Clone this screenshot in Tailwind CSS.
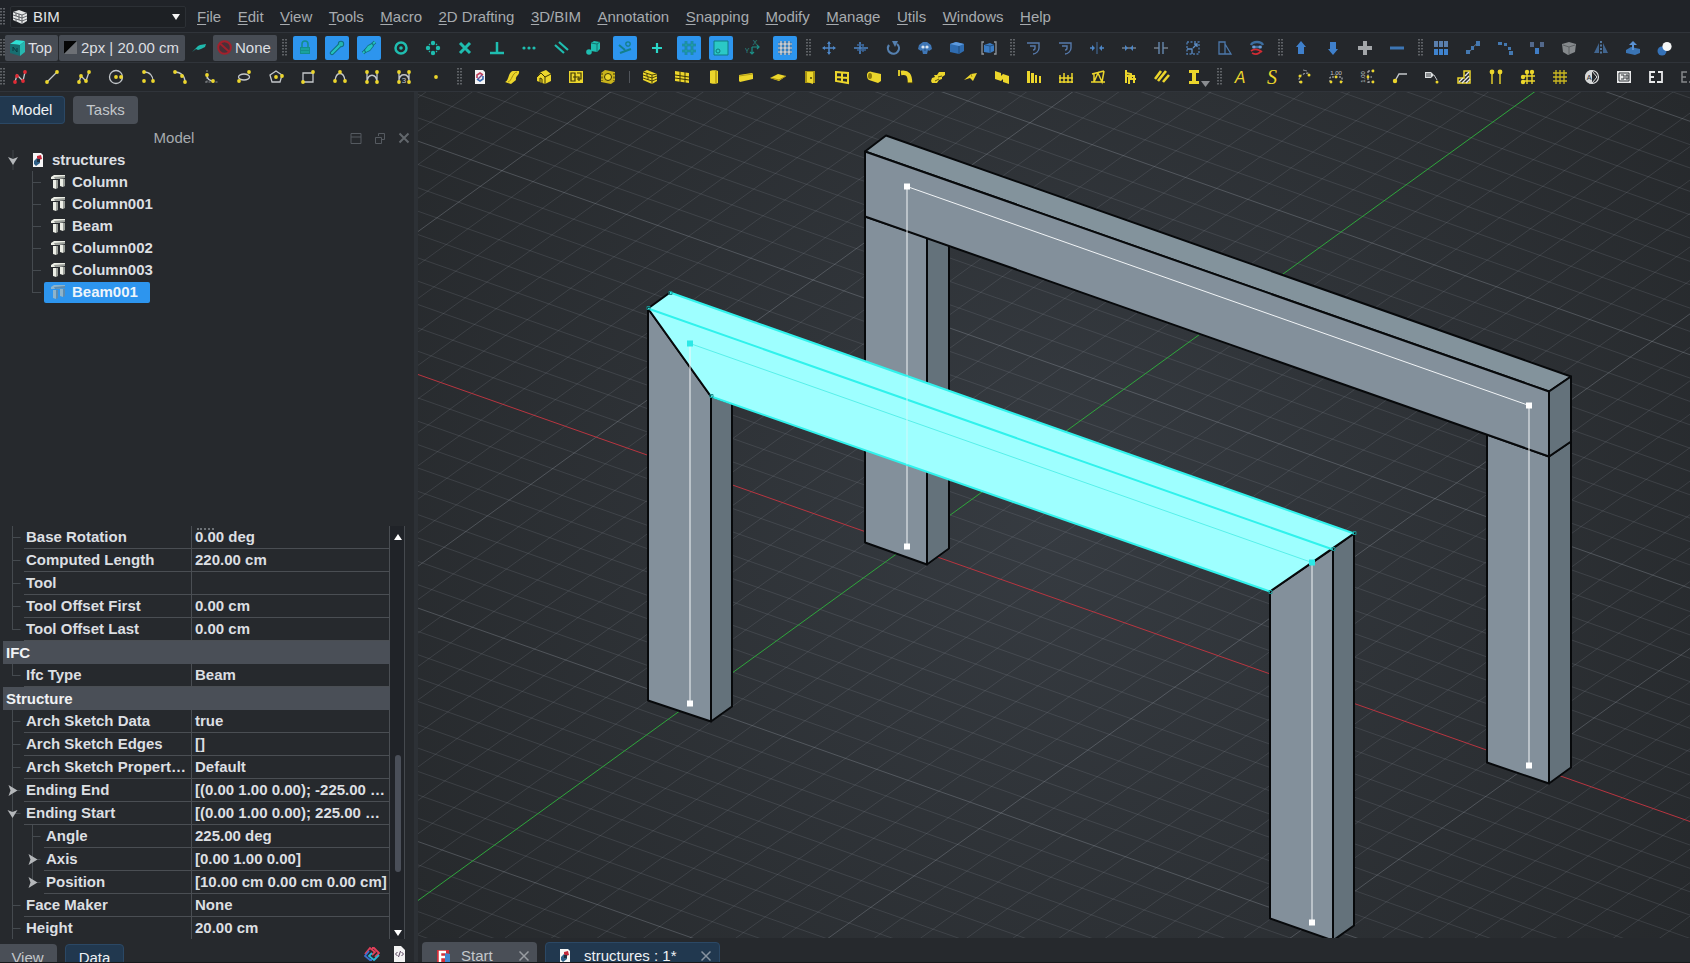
<!DOCTYPE html>
<html lang="en">
<head>
  <meta charset="utf-8">
  <meta name="viewport" content="width=device-width, initial-scale=1">
  <title>structures - BIM</title>
  <script src="https://cdn.jsdelivr.net/npm/@tailwindcss/browser@4"></script>
</head>
<body class="h-screen overflow-hidden flex flex-col bg-[#26292d] text-[#dcdfe2] text-[15px] leading-5 font-['Liberation_Sans',Arial,sans-serif] border-b border-[#17181a]">

  <!-- menu bar -->
  <header class="h-8 pt-0.5 shrink-0 flex items-center bg-[#202328] overflow-hidden">
    <span data-grip class="w-2 shrink-0 flex"></span>
    <div class="relative ml-0.5 w-44 shrink-0">
      <svg class="absolute left-0.5 top-[3px] pointer-events-none" width="16" height="16" viewBox="-8 -8 16 16">
        <path d="M-7-5L-1-7 7-4V4L2 7-7 3Z" fill="#e4e6e6"/>
        <path d="M-7-2L2 1 7-1M-7 1L2 4 7 2M-7-5L2-2 7-4M2-2V7M-4-4V-1M-1 0V3M-4 2V5M-1-3V0" stroke="#44484c" fill="none" stroke-width=".8"/>
      </svg>
      <select aria-label="Workbench" class="appearance-none w-full h-[22px] pl-[22px] leading-5 bg-[#1d2024] border border-[#2c3035] rounded-xs text-[#e2e4e6]">
        <option>BIM</option>
      </select>
      <svg class="absolute right-1.5 top-2 pointer-events-none" width="8" height="6" viewBox="0 0 8 6"><path d="M0 0H8L4 6Z" fill="#f4f4f4"/></svg>
    </div>
    <nav id="menu" class="ml-[11px] w-[854px] shrink-0 flex justify-between text-[#a7abaf] whitespace-nowrap"></nav>
  </header>

  <!-- first toolbar row -->
  <div class="h-[30px] shrink-0 flex items-center bg-[#24272b] border-t border-[#30343a] overflow-hidden">
    <span data-grip class="w-[5px] shrink-0 flex"></span>
    <button class="h-[26px] w-[53px] shrink-0 flex items-center gap-[3px] px-[5px] bg-[#474c54] rounded-xs mr-px">
      <svg class="shrink-0" width="15" height="16" viewBox="0 0 15 16"><path d="M0 4L6 0 15 1 10 5Z" fill="#2fe0d4"/><path d="M0 4L10 5V16L0 13Z" fill="#176e70"/><path d="M10 5L15 1V12L10 16Z" fill="#27b7b0"/><path d="M3 11V7L7 12V8" stroke="#0c3a40" fill="none"/></svg>
      Top
    </button>
    <button class="h-[26px] w-[126px] shrink-0 flex items-center gap-1 px-[5px] bg-[#474c54] rounded-xs whitespace-nowrap">
      <svg class="shrink-0" width="13" height="13" viewBox="0 0 13 13"><path d="M0 0H13L0 13Z" fill="#050505"/><path d="M13 0V13H0Z" fill="#6d7075"/></svg>
      2px | 20.00 cm
    </button>
    <button aria-label="Toggle construction mode" class="w-7 shrink-0 flex justify-center">
      <svg width="16" height="16" viewBox="-8 -8 16 16"><path d="M-7 4L-1-2 1-3 7-4 6-1 2 1-1 2-3 1Z" fill="#1fb9ad"/></svg>
    </button>
    <button class="h-[26px] w-16 shrink-0 flex items-center gap-[3px] px-1 bg-[#474c54] rounded-xs">
      <svg class="shrink-0" width="15" height="15" viewBox="0 0 15 15"><circle cx="7.500" cy="7.500" r="6.300" fill="#4a3038" stroke="#a3202c" stroke-width="2"/><path d="M3 3.500L12 11.500" stroke="#a3202c" stroke-width="2"/></svg>
      None
    </button>
    <div id="snapBar" class="flex items-center"></div>
  </div>

  <!-- second toolbar row -->
  <div class="h-[30px] shrink-0 flex items-center bg-[#24272b] border-y border-[#30343a] overflow-hidden">
    <span data-grip class="w-1 shrink-0 flex"></span>
    <div id="drawBar" class="flex items-center"></div>
  </div>

  <div class="flex-1 min-h-0 flex">
    <aside class="w-[414px] shrink-0 flex flex-col min-h-0">
      <div class="flex gap-2 pt-1 shrink-0">
        <button class="h-7 w-[65px] bg-[#21384f] text-[#eef1f4] rounded-r-sm border border-l-0 border-[#2b4865]">Model</button>
        <button class="h-7 w-[65px] bg-[#4a4f57] text-[#c3c7cb] rounded-sm">Tasks</button>
      </div>
      <div class="h-[25px] shrink-0 flex items-center text-[#a7abaf]">
        <h2 class="flex-1 text-center pt-0.5 pr-0.5">Model</h2>
        <div class="flex gap-3 pr-1 pt-0.5">
          <button aria-label="Minimize panel"><svg width="12" height="12" viewBox="0 0 12 12"><path d="M1 1.500H11V11.500H1ZM1 5H11" stroke="#555a60" fill="none"/></svg></button>
          <button aria-label="Float panel"><svg width="12" height="12" viewBox="0 0 12 12"><path d="M4.500 4V1.500H10.500V7.500H8M1.500 5.500H7.500V11.500H1.500Z" stroke="#555a60" fill="none"/></svg></button>
          <button aria-label="Close panel"><svg width="12" height="12" viewBox="0 0 12 12"><path d="M1.500 1.500L10.500 10.500M10.500 1.500L1.500 10.500" stroke="#62676c" stroke-width="2"/></svg></button>
        </div>
      </div>

      <div class="flex-1 min-h-0 overflow-hidden font-bold">
        <div class="h-[22px] flex items-center">
          <svg class="shrink-0 ml-2" width="10" height="20" viewBox="0 0 10 20"><path d="M5 0V20" stroke="#3f4449"/><path d="M0 7L5 9 10 7 5 15Z" fill="#b4b7ba"/></svg>
          <svg class="shrink-0 ml-[15px] mr-[9px]" width="10" height="14" viewBox="0 0 10 14"><path d="M0 0H8L10 2V14H0Z" fill="#f6f6f6"/><path d="M1 8L4 5 7 6V10L3 13 1 11Z" fill="#2f5f86"/><path d="M4 3L8 2 9 6 6 7 4 5Z" fill="#c32a3c"/><path d="M4 6H7V9H4Z" fill="#203040"/></svg>
          structures
        </div>
        <ul id="tree"></ul>
      </div>

      <!-- property view -->
      <div class="h-[413px] shrink-0 flex overflow-hidden pl-[3px] relative">
        <table class="w-[387px] table-fixed border-collapse font-bold self-start">
          <colgroup><col class="w-[189px]"><col></colgroup>
          <tbody id="props"></tbody>
        </table>
        <div class="absolute left-[197px] top-0.5 w-[17px] border-t-2 border-dotted border-[#6d7277]"></div>
        <div class="w-[15px] border-r border-[#45494e] bg-[#202328] flex flex-col items-center pt-2 pb-[3px] pl-0.5">
          <svg class="shrink-0" width="8" height="7" viewBox="0 0 8 7"><path d="M0 6H8L4 0Z" fill="#fff"/></svg>
          <div class="flex-[214] w-1.5"></div>
          <div class="flex-[117] w-1.5 rounded-full bg-[#4a4f59]"></div>
          <div class="flex-[57] w-1.5"></div>
          <svg class="shrink-0" width="8" height="7" viewBox="0 0 8 7"><path d="M0 1H8L4 7Z" fill="#fff"/></svg>
        </div>
      </div>

      <div class="h-[23px] shrink-0 pt-[5px] flex overflow-hidden">
        <button class="h-7 w-[57px] shrink-0 bg-[#4a4f57] text-[#c3c7cb] rounded-tr-sm mr-2 pr-0.5">View</button>
        <button class="h-7 w-[59px] shrink-0 bg-[#21384f] text-[#eef1f4] rounded-t-sm border border-[#2b4865]">Data</button>
        <button aria-label="IFC properties" class="shrink-0 ml-auto mr-3.5 self-start pt-0.5">
          <svg width="16" height="16" viewBox="-8 -8 16 16"><g fill="none" stroke-width="1.800"><path d="M-7 0L-2-6 3-2 0 1" stroke="#e0405a"/><path d="M0-6H2L7-1 3 3" stroke="#e0405a"/><path d="M7 1L2 6-3 2 0-1" stroke="#28b8d8"/><path d="M0 6H-2L-7 2-3-3" stroke="#3b6fd0"/></g></svg>
        </button>
        <button aria-label="Property source" class="shrink-0 mr-[9px] self-start pt-0.5">
          <svg width="11" height="16" viewBox="0 0 11 16"><path d="M0 0H7L11 4V16H0Z" fill="#f2f2f2"/><path d="M3.500 6L1.500 8 3.500 10M7.500 6L9.500 8 7.500 10M6.500 5L4.500 11" stroke="#55405c" fill="none"/></svg>
        </button>
      </div>
    </aside>

    <div class="w-1 shrink-0 bg-[#2d3136]"></div>

    <main class="flex-1 min-w-0 flex flex-col">
      <div class="flex-1 min-h-0">
        <svg class="block w-full h-full" viewBox="418 92 1272 847" preserveAspectRatio="xMidYMid slice" role="img" aria-label="3D view">
          <defs>
            <radialGradient id="bg" gradientUnits="userSpaceOnUse" cx="1054" cy="515" r="760">
              <stop offset="0" stop-color="#363b41"/><stop offset="1" stop-color="#26292c"/>
            </radialGradient>
          </defs>
          <rect x="418" y="92" width="1272" height="847" fill="url(#bg)"/>
          <path id="minor" stroke="#8b939b" stroke-opacity=".2" fill="none"/>
          <path id="major" stroke="#a5adb5" stroke-opacity=".3" fill="none"/>
          <path d="M418 375L1690 822" stroke="#b83540"/>
          <path d="M418 901L1535 92" stroke="#2fa63c"/>

          <g stroke="#07090b" stroke-width="2" stroke-linejoin="round">
            <!-- rear frame -->
            <path d="M865 217L927 238V565L865 543Z" fill="#83909b"/>
            <path d="M927 238L949 246V549L927 565Z" fill="#64727b"/>
            <path d="M1487 435L1549 457V784L1487 763Z" fill="#83909b"/>
            <path d="M1549 457L1571 442V768L1549 784Z" fill="#64727b"/>
            <path d="M865 152L886 136 1571 377 1549 392Z" fill="#83939c"/>
            <path d="M865 152L1549 392V457L865 217Z" fill="#83909b"/>
            <path d="M1549 392L1571 377V442L1549 457Z" fill="#64727b"/>
            <!-- front columns -->
            <path d="M648 309L711 397V722L648 701Z" fill="#83909b"/>
            <path d="M711 397L732 404V707L711 722Z" fill="#64727b"/>
            <path d="M1270 592L1333 549V941L1270 919Z" fill="#83909b"/>
            <path d="M1333 549L1354 534V926L1333 941Z" fill="#64727b"/>
          </g>
          <path d="M907 547V187L1529 406V766" stroke="#f2f5f7" fill="none"/>
          <path d="M648 309L670 293 1354 534 1270 592 711 397Z" fill="#9effff"/>
          <path d="M711 397L648 309 670 293M1270 592L1354 534" stroke="#07090b" stroke-width="2" fill="none"/>
          <path d="M670 293L1354 534M648 309L1333 550M711 397L1270 592" stroke="#30f2ec" stroke-width="2" fill="none"/>
          <path d="M690 344L1312 563" stroke="#58f0ea"/>
          <path d="M690 344V704M1312 563V923" stroke="#f2f5f7"/>
          <path d="M907 377V465" stroke="#d0f8fa"/>
          <g fill="#fff"><path d="M904 184h6v6h-6zM904 544h6v6h-6zM1526 403h6v6h-6zM1526 763h6v6h-6zM687 701h6v6h-6zM1309 920h6v6h-6z"/></g>
          <g fill="#2ce8e6"><path d="M687 341h6v6h-6zM1309 560h6v6h-6z"/></g>
          <g fill="none" stroke="#1a8f8c"><path d="M647 307h3v3h-3zM669 292h3v3h-3zM1332 548h3v3h-3zM1353 532h3v3h-3zM1269 591h3v3h-3zM710 395h3v3h-3z"/></g>
        </svg>
      </div>
      <div class="h-6 shrink-0 pt-1 pl-1 flex gap-2 overflow-hidden">
        <div class="h-7 w-[115px] shrink-0 flex items-center pl-3.5 pr-2 bg-[#4a4f57] text-[#c3c7cb] rounded-t-sm">
          <svg class="shrink-0 mr-[11px]" width="14" height="15" viewBox="0 0 14 15"><path d="M1 1H13V6L9 8V15H1Z" fill="#d3303a"/><path d="M9 4L14 5V14L9 15Z" fill="#3f86cf"/><path d="M4 13V3H10M4 8H9" stroke="#fff" stroke-width="2.500" fill="none"/></svg>
          <button class="flex-1 text-left">Start</button>
          <button aria-label="Close Start"><svg width="10" height="10" viewBox="0 0 10 10"><path d="M.5.500L9.500 9.500M9.500.500L.5 9.500" stroke="#989ca1" stroke-width="1.500"/></svg></button>
        </div>
        <div class="h-7 w-[175px] shrink-0 flex items-center pl-3.5 pr-2 bg-[#21384f] text-[#eef1f4] rounded-t-sm border border-[#2b4865]">
          <svg class="shrink-0 mr-3.5" width="10" height="14" viewBox="0 0 10 14"><path d="M0 0H8L10 2V14H0Z" fill="#f6f6f6"/><path d="M1 8L4 5 7 6V10L3 13 1 11Z" fill="#2f5f86"/><path d="M4 3L8 2 9 6 6 7 4 5Z" fill="#c32a3c"/><path d="M4 6H7V9H4Z" fill="#203040"/></svg>
          <button class="flex-1 text-left">structures : 1*</button>
          <button aria-label="Close structures"><svg width="10" height="10" viewBox="0 0 10 10"><path d="M.5.500L9.500 9.500M9.500.500L.5 9.500" stroke="#8793a0" stroke-width="1.500"/></svg></button>
        </div>
      </div>
    </main>
  </div>

  <script>
    const Y = '#ecd62c', W = '#c3c7ca', T = '#1fbdb0', B = '#4d86c6', D = '#3a3408';

    // small helpers for the icons, all drawn on a -8..8 grid
    const ln = (d, c = W, w = 1.3, extra = '') => `<path d="${d}" fill="none" stroke="${c}" stroke-width="${w}" ${extra}/>`;
    const fl = (d, c = Y) => `<path d="${d}" fill="${c}"/>`;
    const dots = (list, c = Y, r = 1.9) => list.map(([x, y]) => `<circle cx="${x}" cy="${y}" r="${r}" fill="${c}"/>`).join('');
    const txt = (s, x, y, size, c, extra = '') => `<text x="${x}" y="${y}" font-size="${size}" fill="${c}" text-anchor="middle" ${extra}>${s}</text>`;
    const dash = 'stroke-dasharray="2 1.5"';
    const GRIP = 'grip', SEP = 'sep';

    const snap = [
      GRIP,
      ['Snap lock', fl('M-5-1H5V6H-5Z', '#148f8c') + ln('M-3-1V-4A3 3 0 0 1 3-4V-1', '#148f8c', 1.6) + ln('M-4 1H4M-4 4H4', '#21b5ae', 1), 1],
      ['Endpoint', ln('M-5 5L3-3', '#126f80', 4.4, 'stroke-linecap="round"') + dots([[4, -4]], '#126f80', 3.2) + ln('M-5 5L3-3', '#25c4bd', 2.4, 'stroke-linecap="round"') + dots([[4, -4]], '#25b5b0', 2.2), 1],
      ['Midpoint', ln('M-6 5L6-6', '#126f80', 3.6) + ln('M-6 5L6-6', '#25c4bd', 1.8) + fl('M-5 2L-1-3 4-5 5-2 1 3-4 5Z', '#126f80') + fl('M-4 2L-1-2 3-4 4-2 1 2-3 4Z', '#25c4bd'), 1],
      ['Center', `<circle r="5.500" fill="none" stroke="${T}" stroke-width="2.500"/>` + dots([[0, 0]], T, 1.8)],
      ['Angle', dots([[0, -5], [0, 5], [-5, 0], [5, 0]], T, 2.2) + ln('M-3-4L-4-3M3-4L4-3M-3 4L-4 3M3 4L4 3', T)],
      ['Intersection', ln('M-5-5L5 5M5-5L-5 5', T, 3)],
      ['Perpendicular', ln('M0-6V4', T, 2.5) + ln('M-7 5H7', T, 2.5)],
      ['Extension', dots([[-5, 0], [0, 0], [5, 0]], T, 1.6)],
      ['Parallel', ln('M-6-3L3 5M-2-6L7 2', T, 2.2)],
      ['Special', fl('M-2-5L1-7 7-6V1L4 4-2 3Z', T) + ln('M-2-5L4-4 7-6M4-4V4', '#12736f', 1) + dots([[-4, 4]], T, 2.8)],
      ['Near', ln('M-6-3L0 2M-5 5L6 1', '#14808c', 2) + `<circle cx="3" cy="-4" r="2.200" fill="none" stroke="#14808c" stroke-width="1.300"/>`, 1],
      ['Ortho', ln('M0-5V5M-5 0H5', '#2ad6c8', 2.2)],
      ['Grid', ln('M-3-7V7M3-7V7M-7-3H7M-7 3H7', '#167c98', 2.6) + ln('M-3-7V7M3-7V7M-7-3H7M-7 3H7', '#23a5b0', 1), 1],
      ['Working plane', fl('M-7-7H7V7H-7Z', '#2bc8c6') + ln('M-7-7H7V7H-7Z', '#107c80', 1) + `<circle cx="-3" cy="3" r="2" fill="none" stroke="#107c80"/>`, 1],
      ['Dimensions', ln('M-1-1V6M-1-1H6M4-3L6-1 4 1M-3 4L-1 6 1 4', '#1c8f87', 1.2) + txt('X', 2, -3, 7, '#2a8a85') + txt('Y', -6, 5, 7, '#2a8a85')],
      ['Toggle grid', ln('M-4-7V7M0-7V7M4-7V7M-7-4H7M-7 0H7M-7 4H7', '#3c5f80', 2.4) + ln('M-4-7V7M0-7V7M4-7V7M-7-4H7M-7 0H7M-7 4H7', '#e4e8ec', 1.2), 1],
      GRIP,
      ['Move', ln('M0-6V6M-6 0H6', B, 1.6) + fl('M-2-4L0-7 2-4ZM-2 4L0 7 2 4ZM-4-2L-7 0-4 2ZM4-2L7 0 4 2Z', B)],
      ['Copy', ln('M-1-6V6M-7 0H7', B, 1.6) + ln('M2-4V4M-4-3H3M-4 2H5', '#3b6699', 1.4)],
      ['Rotate', ln('M-4-3A5.500 5.500 0 1 0 4-4', '#5580b0', 2.2) + fl('M-1-7H5L2-1Z', '#5580b0')],
      ['Clone', fl('M-7 1L-6-3-2-6H2L6-3 7 1 4 3 3 2 2 6H-2L-3 2-4 3Z', '#3f76b5') + dots([[-2, -1], [2, -1]], '#d8e4f0', 1.6) + ln('M-1 2H1', '#24507f', 1.2)],
      ['Simple copy', fl('M-7-4L-1-6 7-4V3L2 6-7 4Z', '#2f6cb0') + fl('M-7-4L-1-6 7-4 2-2Z', '#5d9ade') + ln('M2-2V6', '#204a78', 1)],
      ['Compound', ln('M-5-6H-7V6H-5M5-6H7V6H5', '#8f969d', 1.3) + fl('M-5-3L1-5 5-3V3L1 5-5 4Z', '#3b7cc4') + ln('M-4-3L1-2V5M1-2L5-3', '#24507f', 1)],
      GRIP,
      ['Offset', ln('M-6-5H6V0C6 3 3 6 0 6M-3-2H2V0C2 1 1 2 0 2', '#5679ab', 1.4)],
      ['Offset 2D', ln('M-6-5H6V0C6 3 3 6 0 6M-3-2H2V0C2 1 1 2 0 2', '#5679ab', 1.4)],
      ['Trim', ln('M0-6V6', '#41668f', 1.2) + ln('M-7 0H-3M7 0H3', B, 1.6) + fl('M-5-3L-2 0-5 3ZM5-3L2 0 5 3Z', B)],
      ['Join', ln('M-7 0H7', '#8794a2', 1.2) + fl('M-4-3L-1 0-4 3ZM4-3L1 0 4 3Z', B)],
      ['Split', ln('M-7 0H-2M2 0H7', '#9ba9b8', 1.2) + ln('M-2-6V6M2-6V6', '#6689b0', 1.4)],
      ['Scale', ln('M-6-6H6V6H-6Z', '#4c78aa', 1.4, dash) + ln('M-6 1H-1V6M0 0L4-4M1-4H4V-1', '#5d8fc8', 1.3)],
      ['Stretch', ln('M-6-6H0V6H-6ZM0-4L6 6H0', '#4c78aa', 1.3)],
      ['Draft to sketch', ln('M-6-3C-4-7 4-7 6-3M-5-1H5', '#3d6ea0', 2.4) + dots([[-3, -1], [3, -1]], '#6f9bd0', 1.5) + ln('M-6 3C-2 0 3 2 5 4M-5 5C-1 7 2 6 4 3', '#d02b33', 1.8)],
      GRIP,
      ['Upgrade', fl('M0-7L5-1H3V6H-3V-1H-5Z', '#3f80cc')],
      ['Downgrade', fl('M0 7L5 1H3V-6H-3V1H-5Z', '#3f80cc')],
      ['Add', ln('M0-7V7M-7 0H7', '#a3a6a9', 4)],
      ['Remove', ln('M-7 0H7', '#3d76b5', 3)],
      GRIP,
      ['Array', [-7, -2, 3].map(x => fl(`M${x}-7h4v6h-4z`, '#5a7fae') + fl(`M${x} 1h4v6h-4z`, '#3f83ce')).join('')],
      ['Path array', ln('M-6 5C-1 4-2-2 6-5', '#758699', 1) + fl('M3-7h4v5h-4zM-2-2h3v4h-3zM-7 2h4v4h-4z', '#4478b0')],
      ['Polar array', fl('M-7-6h4v3h-4zM-1-5h3v3h-3zM3-1h3v3h-3zM4 3h4v4h-4z', '#4478b0')],
      ['Point array', fl('M-7-6h4v5h-4zM3-6h4v5h-4z', '#53698c') + fl('M-2 0h4v6h-4z', '#3f7cc4')],
      ['Cut with plane', fl('M-7-4L0-6 7-4 6 4-1 7-6 4Z', '#85898c') + ln('M-6-3L0-1 6-3M0-1V6', '#5c6063', 1)],
      ['Mirror', fl('M-2-5V5H-7ZM2-5V5H7Z', '#41658f') + ln('M0-7V7', '#6799d0', 1.4, dash)],
      ['Extrude', fl('M-7 2L-2-1 7 1V5L2 7-7 5Z', '#3a74b4') + fl('M0-7L4-3H1V2H-1V-3H-4Z', '#5a92d4')],
      ['Difference', dots([[-3, 3]], '#3572b8', 4.5) + dots([[2, -1.500]], '#f5f6f6', 4.6)],
    ];

    const draw = [
      ['Sketch', ln('M-5 5L-3-2 3 4 5-5') + dots([[-5, 5], [-3, -1], [3, 4], [5, -5]], '#e02b35')],
      ['Line', ln('M-5 5L5-5') + dots([[-5, 5], [5, -5]])],
      ['Polyline', ln('M-5 5L-3-1 2 4 5-5') + dots([[-5, 5], [-3, -1], [2, 4], [5, -5]])],
      ['Circle', `<circle r="6.500" fill="none" stroke="${W}" stroke-width="1.300"/>` + dots([[0, 0], [5, 0]])],
      ['Arc', ln('M-4-5C2-5 5-1 5 4') + dots([[-4, -5], [-4, 4], [5, 4]])],
      ['Arc by 3 points', ln('M-5-5C1-5 5-1 5 5') + dots([[-5, -5], [2, -1], [5, 5]])],
      ['Fillet', ln('M-5-7V6M-7 5H7', '#8a8e92', 1, dash) + ln('M-5-2C-5 2-2 4 2 4') + dots([[-5, -2], [1, 4]])],
      ['Ellipse', `<ellipse rx="5.500" ry="3" fill="none" stroke="${W}" stroke-width="1.300"/>` + dots([[-5, 4], [5, -5]])],
      ['Polygon', ln('M0-6L6-2 4 5H-4L-6-2Z') + dots([[0, 0], [6, -1]])],
      ['Rectangle', ln('M-5-4H5V5H-5Z') + dots([[5, -5], [-5, 5]])],
      ['B-spline', ln('M-5 4C-4-6 4-6 5 4') + dots([[0, -5], [-5, 4], [5, 4]])],
      ['Bezier curve', ln('M-5 5V-5M5 5V-5M-5 5C-4-4 4-4 5 5') + dots([[-5, -5], [5, -5], [-5, 5], [5, 5]])],
      ['Cubic bezier', ln('M-5 5V-5M5 5V-5M-5 3C-4-4 4-4 5 3') + txt('3', 0, 6, 8, W) + dots([[-5, -5], [5, -5], [-5, 5], [5, 5]])],
      ['Point', dots([[0, 0]])],
      GRIP,
      ['Project', fl('M-5-7H3L5-5V7H-5Z', '#f4f4f4') + ln('M-3 1L-3-2 0-4 3-2', '#c0405a', 1.6) + ln('M3-1V2L0 4-3 2', '#3a6ab0', 1.6) + ln('M-2 2L2-2', '#7a4a90', 1.4)],
      ['Site', fl('M-7 5C-3 4-4-5 1-6L7-6C8-2 3-1 4 3L-1 7Z') + ln('M-4 5C0 4 0-4 5-5', '#a58f10', 1)],
      ['Building', fl('M-7 0L-3-5 2-7 7-3V4L1 7-7 4Z') + ln('M-7 0L-3-4 1 0V7M-4 5V1L-2 2V6M1 0L7-3', D, 1)],
      ['Level', fl('M-7-6H7V6H-7Z') + ln('M-5-4H-1V4H-5ZM1-4H5V2H1M-3 0H3V4', D, 1.2)],
      ['Space', fl('M-7-4L-3-7 7-5V4L3 7-7 5Z', '#c9b31c') + `<circle r="3.500" fill="${Y}" stroke="${D}"/>` + ln('M-6-4V4M6-4V4', D, 1, dash)],
      SEP,
      ['Wall', fl('M-7-5L-3-7 7-3V4L2 7-7 3Z') + ln('M-7-2L2 1 7-1M-7 1L2 4 7 2M-7-5L2-2 7-3M2-2V7M-3-4V-1M-2 0V3', D, .9)],
      ['Curtain wall', fl('M-7-6L7-4V6L-7 4Z') + ln('M-7-2L7 0M-7 1L7 3M-2-6V5M3-5V6', D, 1)],
      ['Column', fl('M-4-6C-3-7 3-7 4-6V6C3 7-3 7-4 6Z') + ln('M2-6V6', '#b59d10', 1.5)],
      ['Beam', fl('M-7-2L6-4 7-3V2L-6 5-7 4Z') + ln('M-7-1L7-3', '#a58f10', .8)],
      ['Slab', fl('M-8 1L0-3 8-1 1 4Z') + ln('M-7 1L1 3 8-1', '#a58f10', 1)],
      ['Door', fl('M-5-6H5V6H-5Z', '#a89412') + fl('M-3-5H3V7L-3 5Z') + dots([[1, 1]], D, .9)],
      ['Window', ln('M-6-5L6-4V6L-6 4ZM0-5V5M-6 0L6 1', Y, 2)],
      ['Pipe', fl('M-7-3C-6-6-3-6-2-5L7-3V4L4 6-5 3C-7 2-7-1-7-3Z') + `<ellipse cx="-4" cy="-1" rx="2" ry="3" fill="#8d7a0c"/>`],
      ['Pipe connector', ln('M-5-4C2-5 4-2 4 6', Y, 4.5) + ln('M-7-7V-1', Y, 1.8) + ln('M1 6H8', D, 1)],
      ['Stairs', fl('M-7 4L-6 1-3 0-4-2H-1L1-5H7L7-2 4 0 4 2 1 3-1 6H-6Z') + ln('M-3 4L1 2M0 0L4-1', D, .8)],
      ['Roof', fl('M-6 3L1-3 7-4 3 4 0 1Z') + ln('M1-3L2 0', '#a58f10', 1)],
      ['Panel', fl('M-7-6L-1-4V-1L1-3 7-1V7L1 5V2L-1 4-7 2Z')],
      ['Frame', fl('M-7-6h3v12h-3zM-3-4h3v10h-3zM1-2h2v8h-2zM5-1h2v7h-2z')],
      ['Fence', ln('M-6-2V6M-2-4V6M2-2V6M6-4V6M-7 1H7M-7 5H7', Y, 1.5)],
      ['Truss', ln('M-6-3L6-6M-7 5H7M-4-3L-4 5 0-4 4 5 6-6', Y, 1.5)],
      ['Equipment', ln('M-4-7V6M-4-1H4V6M-1 0V7M-4-4L1-3V3M2 2H6', Y, 2)],
      ['Rebar', ln('M-7 2L-1-6M-4 4L4-6M1 5L7-2', Y, 2.6)],
      ['Profile', fl('M-5-7H5V-4H2V4H5V7H-5V4H-2V-4H-5Z'), 0, 1],
      GRIP,
      ['Text', txt('A', 0, 6, 16, Y, 'font-style="italic"')],
      ['Shape from text', txt('S', 0, 7, 20, Y, 'font-style="italic" font-family="Liberation Serif"')],
      ['Dimension', ln('M-4 6C-7 1-3-4 5-4', W, 1, dash) + ln('M-1-7L3-6', '#8a8e92', 1) + dots([[-4, -1], [-3, 5], [5, -2]], Y, 1.5)],
      ['Horizontal dimension', ln('M-6 5V0H6V5', W, 1, dash) + txt('1.00', 0, -2, 6, W) + dots([[-5, 5], [5, 5], [0, 0]], Y, 1.4)],
      ['Vertical dimension', ln('M0-6V6M0-6H6M0 5H6M-1 0H4', W, 1, dash) + txt('1.00', 0, -3, 6, W, 'transform="rotate(-90)"') + dots([[5, -6], [5, 5], [0, 0]], Y, 1.4)],
      ['Leader', ln('M-5 4L-1-3H7', W, 1.4) + dots([[-5, 4]], Y, 2.2)],
      ['Label', fl('M-7-5H-1L2-2-1 1H-7Z', '#dcdfe0') + ln('M-6-3H-1M-6-1H-1', '#3b3f43', 1) + ln('M2-2L5 3', W, 1) + dots([[5, 5]], Y, 1.5)],
      ['Hatch', ln('M0-6H6V6H-6V1H0Z', Y, 1.5) + ln('M-5 5L-1 1M-2 6L5-1M2 6L6 2M1-1L5-5', '#e8e8e8', 1.4)],
      ['Axis', ln('M-4-3V7M4-3V7', Y, 1.4) + dots([[-4, -5], [4, -5]], Y, 2.4)],
      ['Axis system', ln('M-1-4V7M4-4V7M-5-1H7M-5 4H7', Y, 1.4) + dots([[-1, -5], [4, -5], [-5, 0], [-5, 5]], Y, 2.2)],
      ['Grid axes', ln('M-4-7V7M4-7V7M0-7V7M-7-4H7M-7 0H7M-7 4H7', '#c9b722', 1.3)],
      ['Section plane', `<circle r="6.500" fill="#24272b" stroke="#e3e4e5" stroke-width="1.200"/>` + fl('M0-7A7 7 0 0 0 0 7Z', '#d6d8d9') + ln('M0-6L5 0 0 6', '#e3e4e5', 1) + txt('A', -3, 3, 7, '#24272b')],
      ['Drawing page', fl('M-7-6H7V6H-7Z', '#e8e9ea') + ln('M-5-4H5V4H-5ZM-3-2H0V2H-3M2-2H4V2H2Z', '#34383c', 1)],
      ['Drawing view', ln('M-1-5H-6V5H-1M-6 0H-2M2-5H6V5H1', '#e8e9ea', 1.8)],
      ['Shape view', ln('M-1-5H-6V5H-1M-6 0H-2M2-5H6V5H1', '#85888b', 1.5)],
    ];

    const grip = `<svg class="shrink-0" width="5" height="18" viewBox="0 0 5 18"><path d="M1 0V18M4 0V18" stroke="#73777c" stroke-width="1.500" stroke-dasharray="1.500 1.500"/></svg>`;

    function toolbar(items) {
      return items.map(it => {
        if (it === GRIP) return `<span class="w-3 shrink-0 flex justify-center pl-0.5">${grip}</span>`;
        if (it === SEP) return `<span class="w-2.5 shrink-0 flex justify-center"><span class="w-px h-3 bg-[#50545a]"></span></span>`;
        const [name, icon, on, menu] = it;
        const box = on ? 'w-6 h-6 mx-1 shrink-0 flex items-center justify-center rounded-xs bg-[#2d95ee]'
          : menu ? 'relative w-[34px] h-6 pr-0.5 shrink-0 flex items-center justify-center'
          : 'w-8 h-6 shrink-0 flex items-center justify-center';
        const arrow = menu ? '<svg class="absolute right-0.5 bottom-0.5" width="9" height="6" viewBox="0 0 9 6"><path d="M0 0H9L4.500 6Z" fill="#8a8d91"/></svg>' : '';
        return `<button aria-label="${name}" class="${box}"><svg width="16" height="16" viewBox="-8 -8 16 16">${icon}</svg>${arrow}</button>`;
      }).join('');
    }

    document.getElementById('snapBar').innerHTML = toolbar(snap);
    document.getElementById('drawBar').innerHTML = toolbar(draw);
    document.querySelectorAll('[data-grip]').forEach(el => el.innerHTML = grip);

    const menus = ['File', 'Edit', 'View', 'Tools', 'Macro', '2D Drafting', '3D/BIM', 'Annotation', 'Snapping', 'Modify', 'Manage', 'Utils', 'Windows', 'Help'];
    document.getElementById('menu').innerHTML = menus.map(m =>
      `<button><span class="underline underline-offset-2">${m[0]}</span>${m.slice(1)}</button>`).join('');

    // model tree
    const parts = ['Column', 'Column001', 'Beam', 'Column002', 'Column003', 'Beam001'];
    document.getElementById('tree').innerHTML = parts.map((name, i) => {
      const last = i === parts.length - 1;
      const c = last ? ['#8db4cc', '#5f8cae'] : ['#eceee6', '#9a9e99'];
      return `
        <li class="h-[22px] flex items-center">
          <svg class="shrink-0 ml-8" width="12" height="22" viewBox="0 0 12 22"><path d="M.5 0V${last ? 11 : 22}M0 11.500H9" stroke="#454a4f" fill="none"/></svg>
          <button class="${last ? 'h-[21px] flex items-center gap-[7px] pl-[7px] pr-3 rounded-xs bg-[#2d95ee] text-[#eef4fa]' : 'h-[21px] flex items-center gap-[7px] pl-[7px] pr-3'}">
            <svg width="14" height="14" viewBox="0 0 14 14"><path d="M0 2L3 0H14V3L4 4H0Z" fill="${c[0]}"/><path d="M3 2L14 1V3L4 4Z" fill="${c[1]}"/><path d="M2 5H5V14L2 13Z" fill="${c[0]}"/><path d="M5 5H7V13L5 14Z" fill="${c[1]}"/><path d="M9 4H12V12L9 11Z" fill="${c[0]}"/><path d="M12 4H14V11L12 12Z" fill="${c[1]}"/></svg>
            ${name}
          </button>
        </li>`;
    }).join('');

    // properties: [name, value, depth, marker]
    const props = [
      ['Base Rotation', '0.00 deg', 0], ['Computed Length', '220.00 cm', 0], ['Tool', '', 0],
      ['Tool Offset First', '0.00 cm', 0], ['Tool Offset Last', '0.00 cm', 0, 'end'],
      ['IFC'], ['Ifc Type', 'Beam', 0, 'end'],
      ['Structure'], ['Arch Sketch Data', 'true', 0], ['Arch Sketch Edges', '[]', 0],
      ['Arch Sketch Propert…', 'Default', 0],
      ['Ending End', '[(0.00 1.00 0.00); -225.00 …', 0, 'closed'],
      ['Ending Start', '[(0.00 1.00 0.00); 225.00 …', 0, 'open'],
      ['Angle', '225.00 deg', 1], ['Axis', '[0.00 1.00 0.00]', 1, 'closed'],
      ['Position', '[10.00 cm 0.00 cm 0.00 cm]', 1, 'closedEnd'],
      ['Face Maker', 'None', 0], ['Height', '20.00 cm', 0],
    ];
    function gutter(depth, mark) {
      const x = 9.5 + depth * 20, w = 21 + depth * 20;
      const stop = mark === 'end' || mark === 'closedEnd' ? 12 : 23;
      let s = (depth ? '<path d="M9.500 0V23" stroke="#454a4f"/>' : '') + `<path d="M${x} 0V${stop}M${x} 11.500h8" stroke="#454a4f" fill="none"/>`;
      if (mark === 'open') s += `<path d="M${x - 5} 8l5 2 5-2-5 8z" fill="#b4b7ba"/>`;
      if (mark === 'closed' || mark === 'closedEnd') s += `<path d="M${x - 4} 6l9 5.500-9 5.500 2-5.500z" fill="#b4b7ba"/>`;
      return `<svg class="shrink-0" width="${w}" height="23" viewBox="0 0 ${w} 23">${s}</svg>`;
    }
    document.getElementById('props').innerHTML = props.map(([name, value, depth, mark]) => value === undefined
      ? `<tr class="h-[23px] bg-[#4a4f57] text-[#f0f2f4]"><th colspan="2" class="p-0 pl-[3px] text-left leading-5">${name}</th></tr>`
      : `<tr class="h-[23px]">
          <th class="p-0 text-left"><div class="flex h-[23px]">${gutter(depth, mark)}<span class="flex-1 pl-0.5 leading-[22px] whitespace-nowrap border-b border-r border-[#4a4e53]">${name}</span></div></th>
          <td class="p-0"><div class="h-[23px] pl-[3px] leading-[22px] whitespace-nowrap border-b border-r border-[#4a4e53]">${value}</div></td>
        </tr>`).join('');

    // ground grid, one step = 10 cm, every tenth line is brighter
    const O = [907, 547], U = [31.1, 10.93], V = [21.7, -15.72];
    const at = (a, b) => `${(O[0] + a * U[0] + b * V[0]).toFixed(1)} ${(O[1] + a * U[1] + b * V[1]).toFixed(1)}`;
    let minor = '', major = '';
    for (let i = -60; i <= 60; i++) {
      if (i === 0) continue;
      const d = `M${at(i, -60)}L${at(i, 60)}M${at(-60, i)}L${at(60, i)}`;
      if (i % 10) minor += d; else major += d;
    }
    document.getElementById('minor').setAttribute('d', minor);
    document.getElementById('major').setAttribute('d', major);
  </script>
</body>
</html>
